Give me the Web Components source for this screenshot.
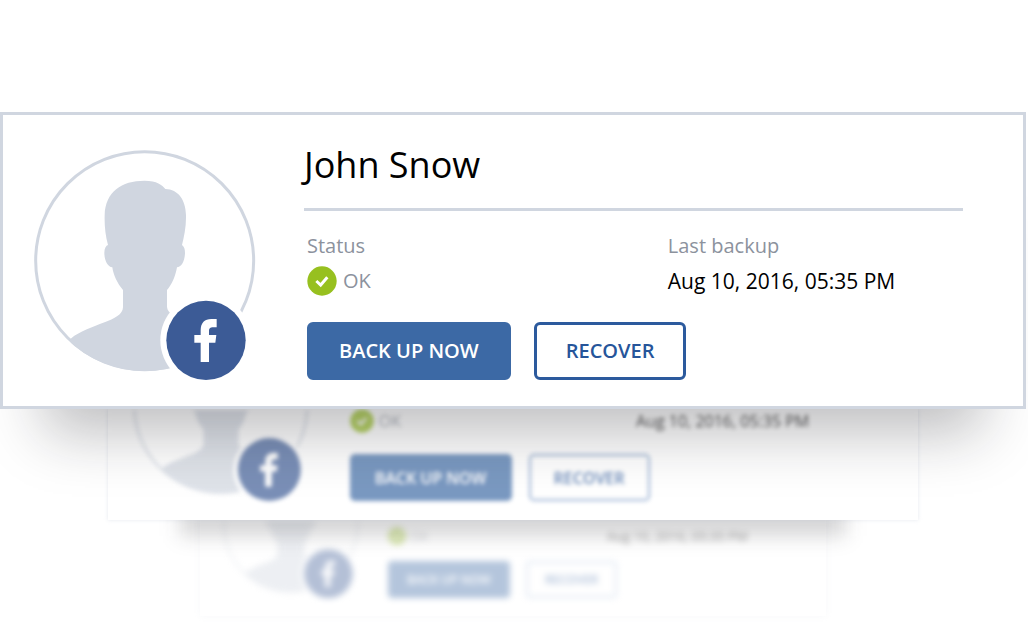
<!DOCTYPE html>
<html lang="en">
<head>
<meta charset="utf-8">
<meta name="viewport" content="width=device-width, initial-scale=1">
<title>Account backup</title>
<style>
  body { margin: 0; background: #fff; font-family: "Open Sans", "Noto Sans", sans-serif; }
</style>
</head>
<body>
<backup-stack>
  <backup-card name="John Snow">
    <backup-facts slot="facts" labels date="Aug 10, 2016, 05:35 PM"></backup-facts>
  </backup-card>
  <backup-peek depth="1"><backup-facts date="Aug 10, 2016, 05:35 PM"></backup-facts></backup-peek>
  <backup-peek depth="2"><backup-facts date="Aug 10, 2016, 05:35 PM"></backup-facts></backup-peek>
</backup-stack>

<script>
class BackupStack extends HTMLElement {
  constructor() {
    super();
    this.attachShadow({ mode: "open" }).innerHTML = `
      <style>
        :host { display: flex; flex-direction: column; align-items: center; padding: 112px 2px 12px 0; }
      </style>
      <slot></slot>`;
  }
}

class ProfileAvatar extends HTMLElement {
  constructor() {
    super();
    this.attachShadow({ mode: "open" }).innerHTML = `
      <style>
        :host { display: block; flex: none; width: var(--avatar-w, 222px); height: var(--avatar-h, 230px); }
        svg { display: block; width: 100%; height: 100%; }
      </style>
      <svg viewBox="102 150 666 690" preserveAspectRatio="xMidYMax slice" role="img" aria-label="Facebook profile">
        <clipPath id="round"><circle cx="434" cy="482" r="331"/></clipPath>
        <circle cx="434" cy="482" r="327" fill="none" stroke="#d0d6e0" stroke-width="9"/>
        <path clip-path="url(#round)" fill="#d0d6e0" d="M433 242C472 242 486 255 496 267C535 268 557 300 558 345C559 380 552 410 546 435C553 440 555 448 555 460C554 485 543 502 531 502C526 530 515 555 501 570V620C503 660 600 670 654 716V900H200L212 716C270 670 368 665 369 622V570C352 550 340 525 337 502C323 500 313 482 313 458C313 445 318 437 324 435C316 405 313 375 314 345C316 275 365 242 433 242Z"/>
        <circle cx="618" cy="721" r="137" fill="#fff"/>
        <circle cx="618" cy="721" r="119" fill="#3c5b96"/>
        <path fill="#fff" d="M583 705H602V691C602 668 614 657 634 657H650V682H640C630 682 627 686 627 694V705H649L646 728H627V786H602V728H583Z"/>
      </svg>`;
  }
}

class BackupFacts extends HTMLElement {
  constructor() {
    super();
    this.attachShadow({ mode: "open" });
  }
  connectedCallback() {
    const labels = this.hasAttribute("labels");
    this.shadowRoot.innerHTML = `
      <style>
        :host { display: block; font-size: var(--text, 20px); line-height: var(--line, 30px); white-space: nowrap; }
        .facts { display: grid; grid-template-columns: 11fr 9fr; row-gap: 5px; }
        .label, .ok { color: #8c929d; }
        .ok { display: flex; align-items: center; gap: var(--ok-gap, 6px); }
        .date { color: #000; font-size: var(--date, 21px); }
        svg { width: var(--line, 30px); height: var(--line, 30px); }
        .actions { display: flex; gap: var(--button-gap, 23px); margin-top: var(--row-gap, 26px); }
        button {
          box-sizing: border-box; height: var(--button-h, 58px); padding: 0 var(--button-pad, 29px);
          border: var(--button-border, 3px) solid var(--outline, #2c5a9d); border-radius: var(--radius, 6px);
          font: 600 var(--button-text, 20px)/var(--line, 30px) "Open Sans", "Noto Sans", sans-serif;
          background: #fff; color: #26559a; white-space: nowrap;
        }
        .primary { background: #3c69a5; border-color: #3c69a5; color: #fff; }
      </style>
      <div class="facts">
        ${labels ? `<div class="label">Status</div><div class="label">Last backup</div>` : ""}
        <div class="ok">
          <svg viewBox="47 407 90 90" aria-hidden="true">
            <circle cx="92" cy="452" r="44" fill="#97c01f"/>
            <path d="M75 452L88 464L108 441" fill="none" stroke="#fff" stroke-width="9"/>
          </svg><span>OK</span>
        </div>
        <div class="date">${this.getAttribute("date")}</div>
      </div>
      <div class="actions">
        <button type="button" class="primary">BACK UP NOW</button>
        <button type="button">RECOVER</button>
      </div>`;
  }
}

class BackupCard extends HTMLElement {
  constructor() {
    super();
    this.attachShadow({ mode: "open" }).innerHTML = `
      <style>
        :host {
          display: flex; align-items: flex-end; gap: 48px; box-sizing: border-box; width: 100%;
          position: relative; z-index: 3; padding: 26px 60px 26px 31px;
          border: 3px solid #d0d6e0; background: #fff;
          box-shadow: 0 68px 56px -44px rgba(20, 22, 30, .28);
        }
        .body { flex: 1; min-width: 0; }
        h1 {
          margin: 0 0 20px; padding: 0 0 19px; border-bottom: 3px solid #d0d6e0;
          font-size: 36px; line-height: 48px; font-weight: 400; color: #000;
        }
        .facts { padding-left: 3px; }
      </style>
      <profile-avatar></profile-avatar>
      <div class="body">
        <h1></h1>
        <div class="facts"><slot name="facts"></slot></div>
      </div>`;
  }
  connectedCallback() {
    this.shadowRoot.querySelector("h1").textContent = this.getAttribute("name");
  }
}

class BackupPeek extends HTMLElement {
  constructor() {
    super();
    this.attachShadow({ mode: "open" }).innerHTML = `
      <style>
        :host { display: block; position: relative; }
        :host([depth="1"]) {
          z-index: 2; width: 79%;
          --edge: 0 0 4px rgba(190, 198, 214, .4); --shade: rgba(20, 22, 30, .18);
          --avatar-w: 176px; --avatar-h: 91px; --gap: 41px; --pad: 0 48px 19px 25px;
          --text: 16px; --date: 16px; --line: 24px; --ok-gap: 5px; --row-gap: 21px;
          --button-h: 47px; --button-pad: 23px; --button-border: 2px; --button-gap: 17px;
          --button-text: 16px; --radius: 5px; --outline: #6f90c0; --fade: .68; --blur: 2px;
        }
        :host([depth="2"]) {
          z-index: 1; width: 61%;
          --edge: 0 0 6px rgba(190, 198, 214, .12); --shade: transparent;
          --avatar-w: 136px; --avatar-h: 78px; --gap: 29px; --pad: 0 40px 18px 23px;
          --text: 13px; --date: 13px; --line: 18px; --ok-gap: 4px; --row-gap: 16px;
          --button-h: 37px; --button-pad: 17px; --button-border: 2px; --button-gap: 16px;
          --button-text: 12px; --radius: 4px; --outline: #a9bedd; --fade: .38; --blur: 3px;
        }
        .shadow { position: absolute; inset: -100px 72px -16px; background: var(--shade); filter: blur(10px); }
        .face { position: relative; background: #fff; box-shadow: var(--edge); }
        .row {
          display: flex; align-items: flex-end; gap: var(--gap); padding: var(--pad);
          opacity: var(--fade); filter: blur(var(--blur));
        }
        .body { flex: 1; min-width: 0; }
      </style>
      <div class="shadow"></div>
      <div class="face">
        <div class="row">
          <profile-avatar></profile-avatar>
          <div class="body"><slot></slot></div>
        </div>
      </div>`;
  }
}

customElements.define("backup-stack", BackupStack);
customElements.define("profile-avatar", ProfileAvatar);
customElements.define("backup-facts", BackupFacts);
customElements.define("backup-card", BackupCard);
customElements.define("backup-peek", BackupPeek);
</script>
</body>
</html>
